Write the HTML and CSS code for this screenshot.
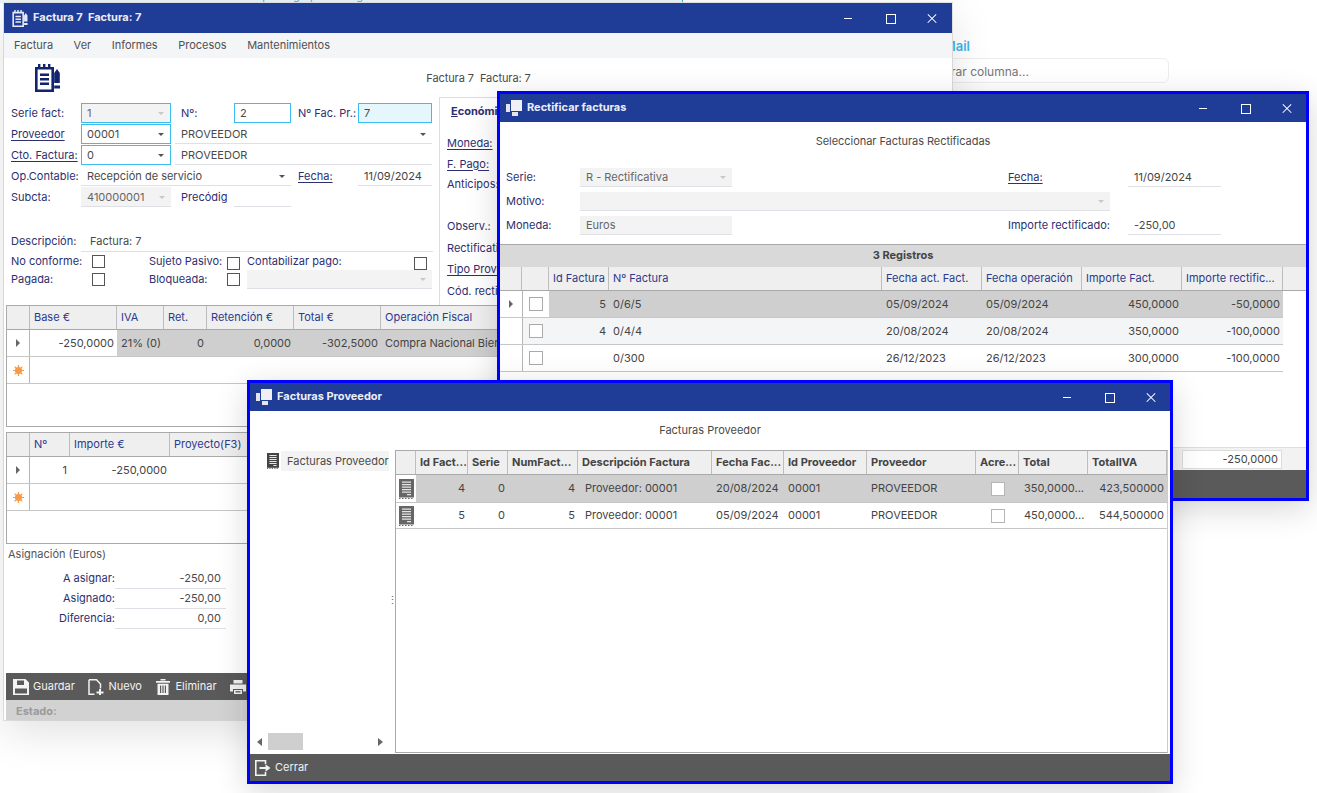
FILE: index.html
```html
<!DOCTYPE html>
<html lang="es">
<head>
<meta charset="utf-8">
<title>Factura 7</title>
<link rel="stylesheet" href="styles.css">
</head>
<body>
<svg class="sprite" aria-hidden="true">
  <symbol id="i-clip" viewBox="0 0 25 28">
    <path d="M1.3 4.3h16.4v22.4H1.3z" fill="none" stroke="currentColor" stroke-width="2.6"/>
    <path d="M3 0h2.4v5H3zM8 0h2.4v5H8zM13 0h2.4v5H13zM5 9.500h9v2.400H5zM5 14h9v2.400H5zM5 18.500h9v2.400H5z" fill="currentColor"/>
    <path d="M22 5l2.800 4v10h-5.600V9zM19.200 21.500H25v3h-5.800z" fill="currentColor"/>
  </symbol>
  <symbol id="i-stack" viewBox="0 0 16 16">
    <path d="M5 0h11v11H5z" fill="#f0f0f4"/>
    <path d="M0 4h4v8H0zM6 12h6v4H6z" fill="#e4e4ea"/>
  </symbol>
  <symbol id="i-doc" viewBox="0 0 15 20">
    <path d="M0 0h15v18.500H0z" fill="currentColor"/>
    <path d="M0 19h1.500v1H0zM3 19h1.500v1H3zM6 19h1.500v1H6zM9 19h1.500v1H9zM12 19h1.500v1H12z" fill="currentColor"/>
    <path d="M3 2.500h9v1.300H3zM3 5h9v1.300H3zM3 7.500h9v1.300H3zM3 10h9v1.300H3zM3 12.500h9v1.300H3zM8 15h4v1.200H8z" fill="#e6e6e6"/>
  </symbol>
  <symbol id="i-star" viewBox="0 0 11 11">
    <circle cx="5.500" cy="5.500" r="3.500" fill="#f7983f"/>
    <path d="M5.500 0v11M0 5.500h11M1.600 1.600l7.800 7.800M9.400 1.600l-7.800 7.800" stroke="#f79a4a" stroke-width="1.200"/>
  </symbol>
  <symbol id="i-save" viewBox="0 0 16 16">
    <path d="M0 0h12.500L16 3.500V16H0zM4 1.500v4.500h7V1.500zM2 9.500V14.500h12V9.500z" fill="#f2f2f2" fill-rule="evenodd"/>
  </symbol>
  <symbol id="i-new" viewBox="0 0 16 16">
    <path d="M1 .8h7.500L12.500 5v4.500M6.500 15.200H1V.8" fill="none" stroke="#f2f2f2" stroke-width="1.500"/>
    <path d="M11 10h2v2.500h2.500v2H13V17h-2v-2.500H8.500v-2H11z" fill="#f2f2f2"/>
  </symbol>
  <symbol id="i-trash" viewBox="0 0 14 16">
    <path d="M0 2h14v1.800H0zM4.500 0h5v1.500h-5z" fill="#f2f2f2"/>
    <path d="M1.500 4.800h11V16h-11zM4 6.500V14h1.200V6.500zM6.400 6.500V14h1.200V6.500zM8.800 6.500V14H10V6.500z" fill="#f2f2f2" fill-rule="evenodd"/>
  </symbol>
  <symbol id="i-print" viewBox="0 0 16 16">
    <path d="M3.500 1h9v3.500h-9zM0 5.500h16v7h-3V10H3v2.500H0zM4 11h8v4H4z" fill="#f2f2f2"/>
    <path d="M5.500 12.200h5v1.300h-5z" fill="#5a5a5a"/>
  </symbol>
  <symbol id="i-exit" viewBox="0 0 16 16">
    <path d="M10.500 4V.8H.8v14.400h9.700V12" fill="none" stroke="#f2f2f2" stroke-width="1.600"/>
    <path d="M4.500 7h6V4.300L15.500 8l-5 3.700V9h-6z" fill="#f2f2f2"/>
  </symbol>
</svg>

<div class="backdrop-top"><span>Arrastra una celda para agrupar los registros</span></div>
<div class="backdrop-mail">Mail</div>
<div class="backdrop-filter">Filtrar columna...</div>

<!-- Factura -->
<section class="win win-invoice">
  <header class="titlebar">
    <svg class="title-icon clip"><use href="#i-clip"/></svg>
    <span class="title-text">Factura 7&nbsp; Factura: 7</span>
    <span class="winbtns"><i class="wb-min"></i><i class="wb-max"></i><i class="wb-close"></i></span>
  </header>
  <nav class="menubar"><span>Factura</span><span>Ver</span><span>Informes</span><span>Procesos</span><span>Mantenimientos</span></nav>
  <div class="inv-head">
    <svg class="big-clip"><use href="#i-clip"/></svg>
    <span class="inv-caption">Factura 7&nbsp; Factura: 7</span>
  </div>
  <div class="inv-body">
    <div class="inv-left">
      <div class="inv-grid">
        <label class="lb">Serie fact:</label>
        <div class="fld focus dis">1<b class="arrow pale"></b></div>
        <i></i>
        <label class="lb">Nº:</label>
        <div class="fld focus">2</div>
        <i></i>
        <label class="lb">Nº Fac. Pr.:</label>
        <div class="fld focus tint">7</div>

        <label class="lb lnk">Proveedor</label>
        <div class="fld focus">00001<b class="arrow"></b></div>
        <i></i>
        <div class="fld line s5">PROVEEDOR<b class="arrow"></b></div>

        <label class="lb lnk">Cto. Factura:</label>
        <div class="fld focus">0<b class="arrow"></b></div>
        <i></i>
        <div class="fld line s5">PROVEEDOR</div>

        <label class="lb">Op.Contable:</label>
        <div class="fld line s4">Recepción de servicio<b class="arrow"></b></div>
        <i></i>
        <label class="lb lnk self">Fecha:</label>
        <div class="fld line val-dark">11/09/2024</div>

        <label class="lb">Subcta:</label>
        <div class="fld dis line">410000001<b class="arrow pale"></b></div>
        <i></i>
        <label class="lb">Precódig</label>
        <div class="fld line"></div>
      </div>
      <div class="desc-row">
        <label class="lb">Descripción:</label>
        <div class="fld line desc">Factura: 7</div>
      </div>
      <div class="checks">
        <label class="lb">No conforme:</label><b class="cb"></b><i></i>
        <label class="lb">Sujeto Pasivo:</label><b class="cb down"></b><i></i>
        <div class="contab"><label class="lb">Contabilizar pago:</label><b class="cb down"></b></div>
        <label class="lb">Pagada:</label><b class="cb"></b><i></i>
        <label class="lb">Bloqueada:</label><b class="cb"></b><i></i>
        <div class="fld dis line block-sel"><b class="arrow pale"></b></div>
      </div>
    </div>
    <aside class="inv-right">
      <div class="panel-title"><u>E</u>conómico</div>
      <label class="lb lnk">Moneda:</label>
      <label class="lb lnk">F. Pago:</label>
      <label class="lb">Anticipos:</label>
      <label class="lb gap">Observ.:</label>
      <label class="lb">Rectificativa:</label>
      <label class="lb lnk tall">Tipo Proveedor:</label>
      <label class="lb">Cód. rectificativa:</label>
    </aside>
  </div>

  <div class="box box-lines">
    <div class="row head g-lines"><span></span><span>Base €</span><span>IVA</span><span>Ret.</span><span>Retención €</span><span>Total €</span><span>Operación Fiscal</span></div>
    <div class="row data g-lines">
      <span class="mark"><b class="tri"></b></span><span class="r cur">-250,0000</span><span class="sel">21% (0)</span><span class="r sel">0</span><span class="r sel">0,0000</span><span class="r sel">-302,5000</span><span class="sel">Compra Nacional Bienes</span>
    </div>
    <div class="row data g-new"><span class="mark"><svg class="star"><use href="#i-star"/></svg></span><span></span></div>
  </div>

  <div class="box box-dist">
    <div class="row head g-dist"><span></span><span>Nº</span><span>Importe €</span><span>Proyecto(F3)</span></div>
    <div class="row data g-dist"><span class="mark"><b class="tri"></b></span><span class="r">1</span><span class="r">-250,0000</span><span></span></div>
    <div class="row data g-new"><span class="mark"><svg class="star"><use href="#i-star"/></svg></span><span></span></div>
  </div>

  <div class="assign">
    <div class="assign-title">Asignación (Euros)</div>
    <div class="assign-grid">
      <label class="lb">A asignar:</label><div class="fld line r">-250,00</div>
      <label class="lb">Asignado:</label><div class="fld line r">-250,00</div>
      <label class="lb">Diferencia:</label><div class="fld line r">0,00</div>
    </div>
  </div>

  <div class="toolbar inv-tools">
    <span class="tool"><svg><use href="#i-save"/></svg>Guardar</span>
    <span class="tool"><svg><use href="#i-new"/></svg>Nuevo</span>
    <span class="tool"><svg class="narrow"><use href="#i-trash"/></svg>Eliminar</span>
    <span class="tool"><svg><use href="#i-print"/></svg>Imprimir</span>
  </div>
  <div class="statusbar"><span class="status-cell">Estado:</span></div>
</section>

<!-- Rectificar -->
<section class="win dialog win-rect">
  <header class="titlebar">
    <svg class="title-icon"><use href="#i-stack"/></svg>
    <span class="title-text">Rectificar facturas</span>
    <span class="winbtns"><i class="wb-min"></i><i class="wb-max"></i><i class="wb-close"></i></span>
  </header>
  <div class="dlg-caption rect-caption">Seleccionar Facturas Rectificadas</div>
  <div class="rect-form">
    <label class="lb">Serie:</label>
    <div class="fld dis line">R - Rectificativa<b class="arrow pale"></b></div>
    <i></i>
    <label class="lb lnk self">Fecha:</label>
    <div class="fld line val-dark">11/09/2024</div>
    <label class="lb">Motivo:</label>
    <div class="fld dis line s-motivo"><b class="arrow pale"></b></div>
    <i></i>
    <label class="lb">Moneda:</label>
    <div class="fld dis line">Euros</div>
    <i></i>
    <label class="lb">Importe rectificado:</label>
    <div class="fld line">-250,00</div>
  </div>
  <div class="group-bar">3 Registros</div>
  <div class="rect-table">
    <div class="row head g-rect"><span></span><span></span><span>Id Factura</span><span>Nº Factura</span><span>Fecha act. Fact.</span><span>Fecha operación</span><span>Importe Fact.</span><span>Importe rectific...</span><span class="filler"></span></div>
    <div class="row data g-rect">
      <span class="mark"><b class="tri"></b></span><span class="cell-cb"><b class="cb"></b></span><span class="r sel">5</span><span class="sel">0/6/5</span><span class="sel">05/09/2024</span><span class="sel">05/09/2024</span><span class="r sel">450,0000</span><span class="r sel">-50,0000</span>
    </div>
    <div class="row data g-rect alt">
      <span class="mark"></span><span class="cell-cb"><b class="cb"></b></span><span class="r">4</span><span>0/4/4</span><span>20/08/2024</span><span>20/08/2024</span><span class="r">350,0000</span><span class="r">-100,0000</span>
    </div>
    <div class="row data g-rect">
      <span class="mark"></span><span class="cell-cb"><b class="cb"></b></span><span class="r"></span><span>0/300</span><span>26/12/2023</span><span>26/12/2023</span><span class="r">300,0000</span><span class="r">-100,0000</span>
    </div>
  </div>
  <div class="rect-sum"><span class="sum-box">-250,0000</span></div>
  <div class="toolbar rect-tools"></div>
</section>

<!-- Facturas Proveedor -->
<section class="win dialog win-prov">
  <header class="titlebar">
    <svg class="title-icon"><use href="#i-stack"/></svg>
    <span class="title-text">Facturas Proveedor</span>
    <span class="winbtns"><i class="wb-min"></i><i class="wb-max"></i><i class="wb-close"></i></span>
  </header>
  <div class="dlg-caption prov-caption">Facturas Proveedor</div>
  <div class="prov-body">
    <div class="tree">
      <div class="tree-item"><svg class="tree-icon"><use href="#i-doc"/></svg><span class="tree-label">Facturas Proveedor</span></div>
      <div class="tree-scroll"><b class="sc-left"></b><b class="sc-thumb"></b><b class="sc-right"></b></div>
    </div>
    <div class="splitter">⋮</div>
    <div class="prov-table">
      <div class="row head strong g-prov"><span></span><span>Id Fact...</span><span>Serie</span><span>NumFact...</span><span>Descripción Factura</span><span>Fecha Fac...</span><span>Id Proveedor</span><span>Proveedor</span><span>Acre...</span><span>Total</span><span>TotalIVA</span></div>
      <div class="row data g-prov">
        <span class="mark doc-cell"><svg class="row-doc"><use href="#i-doc"/></svg></span><span class="r sel">4</span><span class="r sel">0</span><span class="r sel">4</span><span class="sel pad7">Proveedor: 00001</span><span class="sel">20/08/2024</span><span class="sel">00001</span><span class="sel">PROVEEDOR</span><span class="sel cell-cb"><b class="cb white"></b></span><span class="sel pad5">350,0000...</span><span class="r sel">423,500000</span>
      </div>
      <div class="row data g-prov">
        <span class="mark doc-cell"><svg class="row-doc"><use href="#i-doc"/></svg></span><span class="r">5</span><span class="r">0</span><span class="r">5</span><span class="pad7">Proveedor: 00001</span><span>05/09/2024</span><span>00001</span><span>PROVEEDOR</span><span class="cell-cb"><b class="cb pale-cb"></b></span><span class="pad5">450,0000...</span><span class="r">544,500000</span>
      </div>
    </div>
  </div>
  <div class="toolbar prov-tools"><span class="tool"><svg><use href="#i-exit"/></svg>Cerrar</span></div>
</section>
</body>
</html>
```

FILE: styles.css
```css
* { box-sizing: border-box; }
html, body { margin: 0; height: 100%; }
body {
  position: relative;
  width: 1317px;
  height: 793px;
  overflow: hidden;
  background: #fff;
  font: 11px/1.2 Inter, "Liberation Sans", sans-serif;
  color: #4a4a4a;
}
.sprite { display: none; }

/* page behind the windows */
.backdrop-top {
  position: absolute; left: 0; top: 0; width: 683px; height: 3px; padding-left: 168px;
  overflow: hidden; background: #e8f5fb; border-right: 1px solid #3bb0e0; color: #45ade0; font-size: 10.500px;
}
.backdrop-top span { display: block; margin-top: -9px; white-space: nowrap; }
.backdrop-mail { position: absolute; left: 920px; top: 39px; width: 50px; text-align: right; color: #45b4e6; font-size: 13px; font-weight: 600; }
.backdrop-filter {
  position: absolute; left: 900px; top: 58px; width: 269px; height: 25px;
  padding: 0 0 0 33px; line-height: 25px; font-size: 12px; color: #777;
  border: 1px solid #ededed; border-radius: 6px;
}

/* windows */
.win { position: absolute; display: flex; flex-direction: column; background: #fff; overflow: hidden; }
.win-invoice { left: 4px; top: 3px; width: 948px; height: 717px; box-shadow: 0 12px 40px rgba(0,0,0,.12), 0 0 0 1px #e6e6e6; }
.dialog { border: 3px solid #0000ff; box-shadow: 0 8px 30px rgba(0,0,0,.16); }
.win-rect { left: 497px; top: 91px; width: 812px; height: 410px; }
.win-prov { left: 247px; top: 380px; width: 926px; height: 404px; }

.titlebar { flex: none; display: flex; align-items: center; height: 28px; padding-left: 6px; background: #1f3c96; color: #eceef6; }
.win-invoice .titlebar { height: 30px; padding-left: 8px; }
.title-icon { width: 16px; height: 16px; flex: none; margin-right: 5px; }
.title-icon.clip { width: 16px; height: 17px; margin-right: 5px; color: #e8eaf2; }
.title-text { font-weight: 700; font-size: 11px; }
.winbtns { margin-left: auto; margin-right: -4px; display: flex; height: 100%; }
.win-invoice .winbtns { margin-right: -3px; }
.winbtns i { position: relative; display: block; width: 42px; height: 100%; }
.wb-min::after { content: ""; position: absolute; left: 15px; top: 50%; width: 8px; height: 1px; background: #fff; }
.wb-max::after { content: ""; position: absolute; left: 15px; top: calc(50% - 4px); width: 8px; height: 8px; border: 1px solid #fff; }
.wb-close::before, .wb-close::after { content: ""; position: absolute; left: 13px; top: 50%; width: 12px; height: 1.2px; background: #fff; transform: rotate(45deg); }
.wb-close::after { transform: rotate(-45deg); }

.menubar { flex: none; display: flex; gap: 20.500px; align-items: center; height: 25px; padding-left: 10px; background: #f4f5f7; color: #505050; }

/* generic form pieces */
.lb { color: #2d2f70; white-space: nowrap; align-self: center; padding-top: 1px; }
.lb.lnk { text-decoration: underline; text-underline-offset: 2px; }
.lb.self { justify-self: start; }
.fld { position: relative; display: flex; align-items: center; height: 20px; padding: 1px 0 0 6px; white-space: nowrap; overflow: hidden; }
.fld.focus { border: 1px solid #3bbdf2; padding-left: 5px; }
.fld.line { border-bottom: 1px solid #dfdfe6; }
.inv-grid .fld.line { padding-top: 2px; }
.fld.dis { background: #f3f3f3; color: #666; }
.fld.tint { background: #e6f6fd; }
.fld.r { justify-content: flex-end; padding: 1px 5px 0 0; }
.val-dark { color: #444; }
.arrow { position: absolute; right: 6px; top: 50%; margin-top: -1px; border: 3px solid transparent; border-top-color: #555; border-bottom: 0; border-left-width: 3.500px; border-right-width: 3.500px; }
.arrow.pale { border-top-color: #c8c8c8; }
.cb { display: block; width: 13px; height: 13px; border: 1px solid #555; background: #fff; }

/* invoice */
.inv-head { flex: none; display: grid; grid-template-columns: 1fr auto 1fr; align-items: center; height: 39px; padding-left: 31px; }
.big-clip { width: 25px; height: 28px; color: #10256e; }
.inv-caption { position: relative; left: -15px; top: 1px; letter-spacing: -.08px; }
.inv-body { flex: none; display: flex; height: 208px; }
.inv-left { width: 435px; padding: 6px 0 0 7px; flex: none; }
.inv-grid { display: grid; grid-template-columns: 70px 90px 10px 53px 57px 7px 60px 74px; grid-auto-rows: 20px; row-gap: 1px; }
.s4 { grid-column: span 4; }
.s5 { grid-column: span 5; margin-left: -6px; }
.desc-row { display: grid; grid-template-columns: 70px 352px; margin-top: 25px; }
.desc-row .lb { padding-top: 0; }
.desc { padding-left: 9px; }
.checks { display: grid; grid-template-columns: 81px 13px 44px 78px 13px 7px 185px; grid-template-rows: 19px 17px; align-items: center; }
.checks .down { margin-top: 3px; }
.contab { display: flex; justify-content: space-between; align-items: center; padding-right: 5px; }
.block-sel { height: 19px; }
.inv-right { flex: 1; padding: 6px 0 0 7px; border-left: 1px solid #ddd; border-top: 1px solid #ddd; display: flex; flex-direction: column; align-items: flex-start; }
.panel-title { font-weight: 700; color: #2d2f70; height: 33px; padding: 0 0 0 4px; line-height: 15px; }
.inv-right .lb { height: 21px; line-height: 15px; align-self: flex-start; padding-top: 0; }
.inv-right .lb.gap { margin-top: 21px; height: 23px; }
.inv-right .lb.tall { height: 23px; }

/* data grids */
.box { flex: none; margin: 0 0 0 2px; border: 1px solid #a9a9a9; border-width: 1px 0 1px 1px; }
.box-lines { height: 122px; }
.box-dist { height: 112px; margin-top: 5px; }
.row { display: grid; align-items: stretch; }
.row > span { display: flex; align-items: center; padding: 0 3px 0 4px; white-space: nowrap; overflow: hidden; min-width: 0; }
.row .r { justify-content: flex-end; }
.head { height: 24px; background: #efefef; color: #2b3a8e; border-bottom: 1px solid #a9a9a9; }
.head > span { border-right: 1px solid #bdbdbd; }
.head.strong { color: #444; font-weight: 700; }
.data { height: 27px; background: #fff; color: #444; border-bottom: 1px solid #c6c6c6; }
.data > span { padding-top: 1px; }
.data .mark { padding: 0; justify-content: center; background: #fff; border-right: 1px solid #b5b5b5; }
.box .data .mark { border-bottom: 0; }
.sel { background: #cfcfcf; }
.alt { background: #f4f5f7; }
.mark .tri { display: block; border: 4px solid transparent; border-left: 4px solid #666; border-right: 0; }
.star { width: 11px; height: 11px; }
.g-lines { grid-template-columns: 23px 87px 47px 43px 87px 87px 1fr; }
.g-dist { grid-template-columns: 23px 40px 100px 1fr; }
.g-new { grid-template-columns: 23px 1fr; }
.g-rect { grid-template-columns: 22px 27px 60px 273px 100px 100px 100px 101px 1fr; }
.g-prov { grid-template-columns: 20px 52px 40px 70px 134px 72px 83px 109px 43px 69px 79px; }

/* assignment */
.assign { flex: none; padding: 2px 0 0 4px; }
.assign-title { height: 17px; line-height: 17px; color: #555; }
.assign-grid { display: grid; grid-template-columns: 107px 111px; grid-auto-rows: 20px; margin-top: 6px; }
.assign-grid .lb { text-align: right; padding-top: 0; }

/* toolbars */
.toolbar { flex: none; display: flex; align-items: center; background: #5a5a5a; color: #f2f2f2; }
.tool { display: flex; align-items: center; white-space: nowrap; }
.tool svg { width: 16px; height: 16px; margin-right: 4px; flex: none; }
.tool svg.narrow { width: 14px; margin: 0 5px 0 1px; }
.inv-tools { height: 27px; margin: auto 0 0 2px; padding-left: 7px; gap: 13.500px; }
.statusbar { flex: none; height: 20px; margin-left: 2px; background: #d2d2d2; color: #9a9a9a; font-weight: 700; }
.status-cell { display: block; width: 236px; height: 100%; padding-left: 10px; line-height: 22px; border-right: 1px solid #dcdcdc; }

/* rectificar */
.dlg-caption { flex: none; text-align: center; }
.rect-caption { padding-top: 13px; height: 46px; letter-spacing: -.05px; }
.rect-form { flex: none; display: grid; grid-template-columns: 74px 152px 276px 120px 93px; grid-auto-rows: 19px; row-gap: 5px; padding-left: 6px; height: 76px; }
.rect-form .fld { height: 19px; }
.s-motivo { grid-column: span 3; width: 530px; }
.group-bar { flex: none; height: 23px; line-height: 21px; text-align: center; font-weight: 700; color: #444; background: #d9d9d9; border-top: 1px solid #a9a9a9; }
.rect-table { flex: none; height: 180px; }
.rect-table .filler { border-right: 0; }
.rect-table .mark { border-right: 0; }
.rect-table .data { width: 783px; }
.rect-table .data .cell-cb { background: #fff; border-left: 1px solid #b5b5b5; }
.rect-table .alt .cell-cb { background: #f4f5f7; }
.cell-cb { justify-content: center; padding: 0 !important; }
.rect-table .cb, .prov-table .cb { width: 14px; height: 14px; border-color: #aaa; }
.cb.white, .cb.pale-cb { border-color: #b5b5b5; }
.rect-sum { flex: none; height: 23px; display: flex; justify-content: flex-end; align-items: center; padding-right: 24px; background: #f2f2f2; border-top: 1px solid #ddd; }
.sum-box { width: 100px; height: 19px; line-height: 17px; text-align: right; padding-right: 3px; background: #fff; border: 1px solid #ddd; color: #444; }
.rect-tools { flex: 1; }

/* proveedor */
.prov-caption { padding-top: 13px; height: 39px; }
.prov-body { flex: 1; display: flex; min-height: 0; }
.tree { width: 139px; flex: none; display: flex; flex-direction: column; justify-content: space-between; padding: 1px 0 2px 7px; }
.tree-item { display: flex; align-items: center; height: 20px; padding-left: 10px; }
.tree-icon { width: 12px; height: 16px; color: #444; margin-right: 2px; flex: none; }
.tree-label { flex: 1; height: 20px; line-height: 20px; padding-left: 6px; background: #f3f3f3; white-space: nowrap; }
.tree-scroll { display: flex; align-items: center; height: 17px; }
.sc-left { margin-right: 6px; border: 4px solid transparent; border-right: 5px solid #666; border-left: 0; }
.sc-thumb { width: 35px; height: 17px; background: #cfcfcf; }
.sc-right { margin-left: auto; margin-right: 6px; border: 4px solid transparent; border-left: 5px solid #666; border-right: 0; }
.splitter { width: 6px; flex: none; align-self: center; text-align: center; color: #666; margin: -1px 2px 0 -2px; }
.prov-table { flex: none; width: 773px; height: 303px; border: 1px solid #a9a9a9; border-right-color: #ccc; border-bottom-color: #a9a9a9; }
.prov-table .doc-cell { background: #fff; border-right: 0; }
.prov-table .data > span { padding-top: 0; }
.prov-table .head + .data { height: 28px; }
.prov-table .data + .data { height: 26px; }
.prov-table .pad7 { padding-left: 7px; }
.prov-table .pad5 { padding-left: 5px; }
.row-doc { width: 15px; height: 20px; color: #666; }
.prov-tools { height: 27px; margin-top: 2px; padding: 1px 0 0 5px; }
```
